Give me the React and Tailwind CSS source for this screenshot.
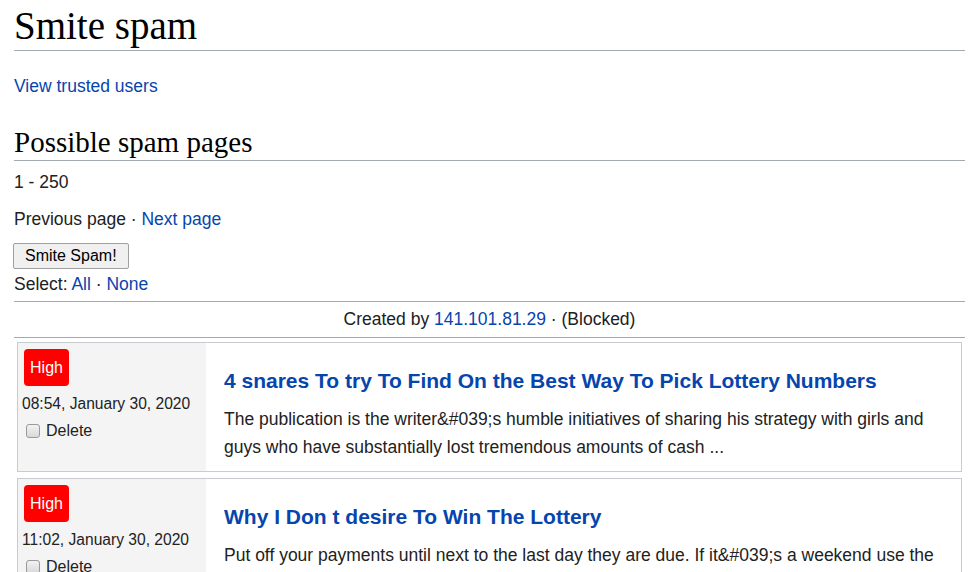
import { useState } from "react";

const pages = [
  {
    time: "08:54, January 30, 2020",
    title: "4 snares To try To Find On the Best Way To Pick Lottery Numbers",
    text: "The publication is the writer&#039;s humble initiatives of sharing his strategy with girls and guys who have substantially lost tremendous amounts of cash ...",
  },
  {
    time: "11:02, January 30, 2020",
    title: "Why I Don t desire To Win The Lottery",
    text: "Put off your payments until next to the last day they are due. If it&#039;s a weekend use the money you save for a lottery ticket or two, and keep the rest ...",
  },
];

function SpamCard({ page }) {
  const [checked, setChecked] = useState(false);
  return (
    <div className="flex border border-[#c8ccd1] mx-[3px] mb-[6px]">
      {/* left meta column */}
      <div className="w-[188px] shrink-0 bg-[#f4f4f4] pt-[6px] pl-[4px] pb-[29px]">
        <span className="ml-[2px] inline-flex items-center justify-center w-[45px] h-[37px] rounded-[4px] bg-[#ff0000] text-white text-[16px]">
          High
        </span>
        <div className="text-[15.6px] leading-[22px] mt-[7px] text-[#222]">{page.time}</div>
        <label className="flex items-center gap-[6px] text-[16px] leading-[22px] text-[#222] mt-[5px] pl-[4px]">
          <input
            type="checkbox"
            checked={checked}
            onChange={() => setChecked(c => !c)}
            className="appearance-none w-[14px] h-[14px] m-0 rounded-[3px] border border-[#9a9a9a] bg-gradient-to-b from-[#f2f2f2] to-[#d9d9d9] checked:bg-[#0075ff]"
          />
          Delete
        </label>
      </div>
      {/* right content */}
      <div className="flex-1 pl-[18px] pr-[16px] pt-[25px]">
        <a href="#" className="block text-[21px] font-bold leading-[26px] text-[#0645ad]">
          {page.title}
        </a>
        <p className="mt-[11px] text-[17.5px] leading-[28px] text-[#222]">{page.text}</p>
      </div>
    </div>
  );
}

export default function App() {
  return (
    <div className="h-[572px] overflow-hidden bg-white pl-[14px] pr-[11px] text-[#202122] text-[17.5px] font-['Liberation_Sans',Arial,sans-serif]">
      <h1 className="mt-[2px] leading-[48px] text-[39px] font-['Liberation_Serif',serif] text-black border-b border-[#a2a9b1]">
        Smite spam
      </h1>

      <p className="mt-[24px] leading-[22px]">
        <a href="#" className="text-[#0645ad]">View trusted users</a>
      </p>

      <h2 className="mt-[28px] leading-[35px] text-[29px] font-['Liberation_Serif',serif] text-black border-b border-[#a2a9b1]">
        Possible spam pages
      </h2>

      <p className="mt-[10px] leading-[22px]">1 - 250</p>

      <p className="mt-[15px] leading-[22px]">
        Previous page · <a href="#" className="text-[#0645ad]">Next page</a>
      </p>

      <button className="mt-[13px] -ml-px h-[26px] px-[11px] text-[16px] text-black bg-[#f0f0f0] border border-[#a0a0a0] rounded-[2px]">
        Smite Spam!
      </button>

      <p className="mt-[4px] leading-[22px]">
        Select: <a href="#" className="text-[#0645ad]">All</a> · <a href="#" className="text-[#0645ad]">None</a>
      </p>

      <div className="mt-[6px] border-y border-[#a2a9b1] text-center leading-[35px]">
        Created by <a href="#" className="text-[#0645ad]">141.101.81.29</a> · (Blocked)
      </div>

      <div className="mt-[4px]">
        {pages.map(p => (
          <SpamCard key={p.time} page={p} />
        ))}
      </div>
    </div>
  );
}
